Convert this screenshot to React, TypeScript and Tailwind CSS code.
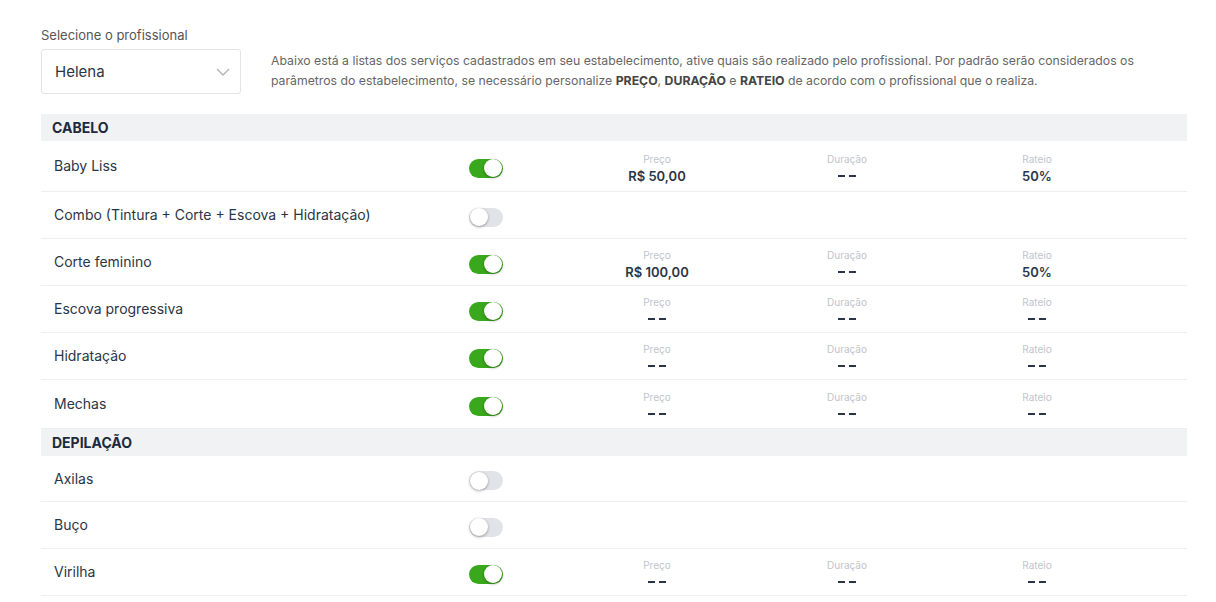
import React from "react";

type Svc = { name: string; on: boolean; h: string; preco?: string; dur?: string; rat?: string };

const D = "dash";

const cabelo: Svc[] = [
  { name: "Baby Liss", on: true, h: "h-[51px]", preco: "R$ 50,00", dur: D, rat: "50%" },
  { name: "Combo (Tintura + Corte + Escova + Hidratação)", on: false, h: "h-[47px]" },
  { name: "Corte feminino", on: true, h: "h-[47px]", preco: "R$ 100,00", dur: D, rat: "50%" },
  { name: "Escova progressiva", on: true, h: "h-[47px]", preco: D, dur: D, rat: D },
  { name: "Hidratação", on: true, h: "h-[47px]", preco: D, dur: D, rat: D },
  { name: "Mechas", on: true, h: "h-[49px]", preco: D, dur: D, rat: D },
];

const depil: Svc[] = [
  { name: "Axilas", on: false, h: "h-[46px]" },
  { name: "Buço", on: false, h: "h-[47px]" },
  { name: "Virilha", on: true, h: "h-[47px]", preco: D, dur: D, rat: D },
];

function Toggle({ on }: { on: boolean }) {
  return (
    <div
      className={`relative mt-[4px] w-[34px] h-[19px] rounded-full ${on ? "bg-[#3aa81c]" : "bg-[#e2e3e8]"}`}
    >
      <div
        className={`absolute top-[0.5px] w-[18px] h-[18px] rounded-full bg-white shadow-[0_1px_3px_rgba(0,0,0,0.35)] ${on ? "left-[15px]" : "left-[1px]"}`}
      />
    </div>
  );
}

function Dash() {
  return (
    <span className="flex items-center gap-[4px] h-[18px] mt-[1px]">
      <span className="w-[7px] h-[2px] bg-[#2a3547]" />
      <span className="w-[7px] h-[2px] bg-[#2a3547]" />
    </span>
  );
}

function Col({ label, value }: { label: string; value: string }) {
  return (
    <div className="w-[190px] flex flex-col items-center">
      <div className="text-[10px] leading-[14px] text-[#c0c4cc]">{label}</div>
      {value === D ? (
        <Dash />
      ) : (
        <div className="text-[13px] leading-[18px] mt-[1px] font-semibold text-[#2a3547]">{value}</div>
      )}
    </div>
  );
}

function Row({ s }: { s: Svc }) {
  return (
    <div className={`flex items-center ${s.h} border-b border-[#eceef2] pl-[13px]`}>
      <div className="w-[415px] text-[14px] text-[#2a3547] -mt-[1px]">{s.name}</div>
      <Toggle on={s.on} />
      {s.on && s.preco && (
        <div className="flex ml-[59px] mt-[4px]">
          <Col label="Preço" value={s.preco} />
          <Col label="Duração" value={s.dur!} />
          <Col label="Rateio" value={s.rat!} />
        </div>
      )}
    </div>
  );
}

function Section({ title }: { title: string }) {
  return (
    <div className="h-[27px] bg-[#f1f2f4] flex items-center pl-[11px] text-[14px] font-bold text-[#1e2a3b]">
      {title}
    </div>
  );
}

export default function App() {
  return (
    <div className="w-[1216px] h-[602px] bg-white overflow-hidden" style={{ fontFamily: "Inter, 'Noto Sans', sans-serif" }}>
      <div className="ml-[41px] w-[1146px] pt-[27px]">
        <div className="flex">
          <div className="w-[200px]">
            <div className="text-[13px] leading-[17px] text-[#555]">Selecione o profissional</div>
            <div className="mt-[5px] h-[45px] border border-[#e3e4e8] rounded-[3px] flex items-center justify-between pl-[13px] pr-[10px]">
              <span className="text-[15px] text-[#2a3547] mt-[1px]">Helena</span>
              <svg width="14" height="8" viewBox="0 0 14 8" fill="none">
                <path d="M1 1l6 6 6-6" stroke="#b0b3ba" strokeWidth="1.3" />
              </svg>
            </div>
          </div>
          <div className="ml-[30px] mt-[24px] text-[12.25px] leading-[20px] text-[#666] w-[880px]">
            Abaixo está a listas dos serviços cadastrados em seu estabelecimento, ative quais são realizado pelo profissional. Por padrão serão considerados os parâmetros do estabelecimento, se necessário personalize <b className="text-[#444]">PREÇO</b>, <b className="text-[#444]">DURAÇÃO</b> e <b className="text-[#444]">RATEIO</b> de acordo com o profissional que o realiza.
          </div>
        </div>
        <div className="mt-[20px]">
          <Section title="CABELO" />
          {cabelo.map((s) => (
            <Row key={s.name} s={s} />
          ))}
          <Section title="DEPILAÇÃO" />
          {depil.map((s) => (
            <Row key={s.name} s={s} />
          ))}
        </div>
      </div>
    </div>
  );
}
